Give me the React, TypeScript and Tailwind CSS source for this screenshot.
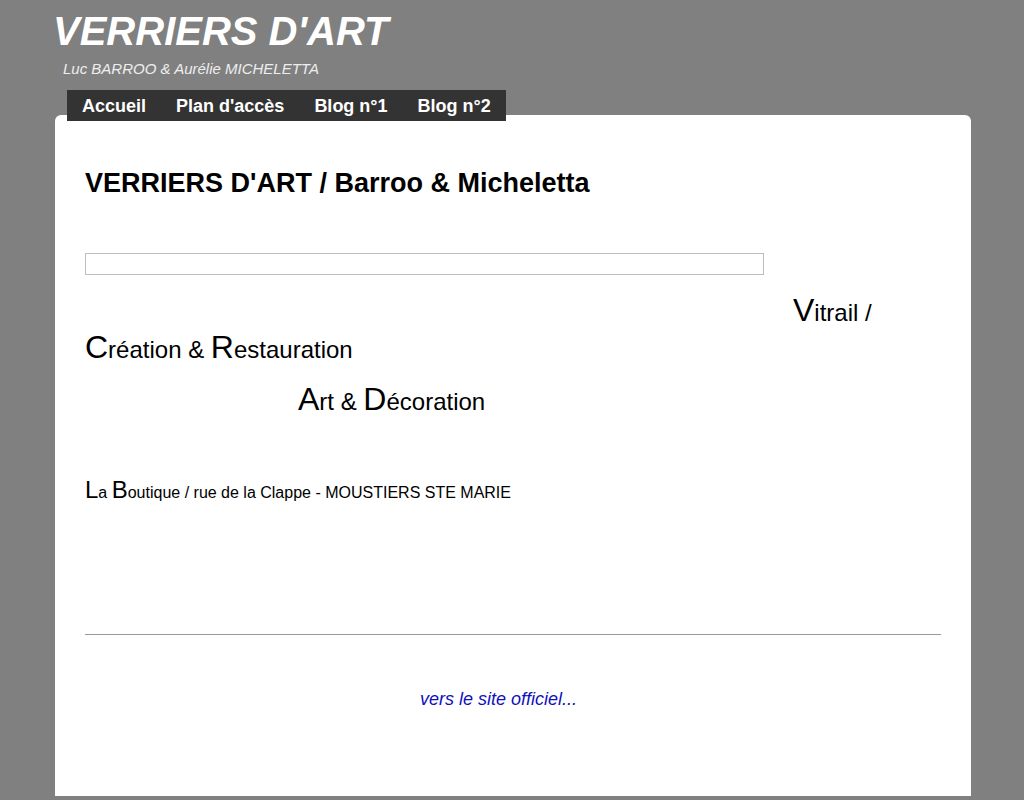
import React from "react";

export default function App() {
  return (
    <div className="min-h-[800px] h-[800px] overflow-hidden bg-[#808080] font-['Liberation_Sans',Arial,sans-serif]">
      <div className="pl-[53px] pt-[7px]">
        <h1 className="text-[40px] leading-[48px] font-bold italic text-white">VERRIERS D'ART</h1>
        <div className="mt-[4px] pl-[10px] text-[15px] leading-[20px] italic text-[#eeeeee]">
          Luc BARROO &amp; Aurélie MICHELETTA
        </div>
      </div>
      <nav className="relative z-10 ml-[67px] mt-[11px] flex w-fit bg-[#333333]">
        {["Accueil", "Plan d'accès", "Blog n°1", "Blog n°2"].map((t) => (
          <a key={t} className="px-[15px] pt-[1px] text-[18px] leading-[30px] font-bold text-white">
            {t}
          </a>
        ))}
      </nav>
      <main className="-mt-[6px] ml-[55px] w-[916px] h-[681px] rounded-t-[6px] bg-white pl-[30px] pr-[30px] pt-[52px] text-black">
        <h2 className="text-[27px] leading-[32px] font-bold">VERRIERS D'ART / Barroo &amp; Micheletta</h2>
        <div className="mt-[54px] h-[22px] w-[679px] border border-[#bdbdbd]"></div>
        <div className="mt-[18px] text-[24px] leading-[34px]">
          <div className="pl-[708px]">
            <span className="text-[32px]">V</span>itrail /
          </div>
          <div>
            <span className="text-[32px]">C</span>réation &amp; <span className="text-[32px]">R</span>estauration
          </div>
        </div>
        <div className="mt-[15px] pl-[213px] text-[24px] leading-[34px]">
          <span className="text-[32px]">A</span>rt &amp; <span className="text-[32px]">D</span>écoration
        </div>
        <div className="mt-[57px] text-[16px] leading-[28px]">
          <span className="text-[24px]">L</span>a <span className="text-[24px]">B</span>outique / rue de la Clappe - MOUSTIERS STE MARIE
        </div>
        <div className="mt-[127px] border-t border-[#999999]"></div>
        <div className="mt-[53px] pr-[29px] text-center text-[18px] leading-[22px] italic">
          <a className="text-[#1111bb]">vers le site officiel...</a>
        </div>
      </main>
    </div>
  );
}
